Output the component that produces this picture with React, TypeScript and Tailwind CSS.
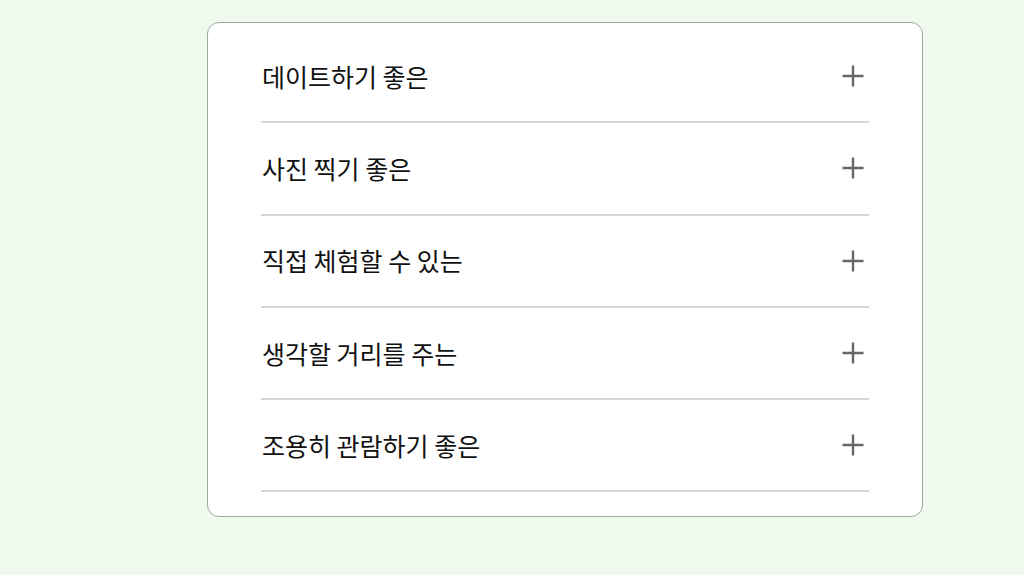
const items = [
  "데이트하기 좋은",
  "사진 찍기 좋은",
  "직접 체험할 수 있는",
  "생각할 거리를 주는",
  "조용히 관람하기 좋은",
];

function PlusIcon() {
  return (
    <svg width="22" height="22" viewBox="0 0 22 22" fill="none" className="shrink-0">
      <path d="M11 0.5V21.5M0.5 11H21.5" stroke="#666666" strokeWidth="2.4" />
    </svg>
  );
}

export default function App() {
  return (
    <div
      className="min-h-[575px] w-full bg-[#eff9ee] pt-[22px] pl-[207px]"
      style={{ fontFamily: '"Noto Sans CJK KR", "Noto Sans", sans-serif' }}
    >
      <div className="w-[716px] h-[495px] rounded-[12px] border border-[#9dab9b] bg-white px-[53px] pt-[8px] pb-[24px]">
        {items.map((label) => (
          <div
            key={label}
            className="flex h-[92.3px] items-center justify-between border-b-2 border-[#d6d6d6] pl-px pr-[5px]"
          >
            <span className="text-[25px] font-normal leading-none text-[#111111]">{label}</span>
            <PlusIcon />
          </div>
        ))}
      </div>
    </div>
  );
}
